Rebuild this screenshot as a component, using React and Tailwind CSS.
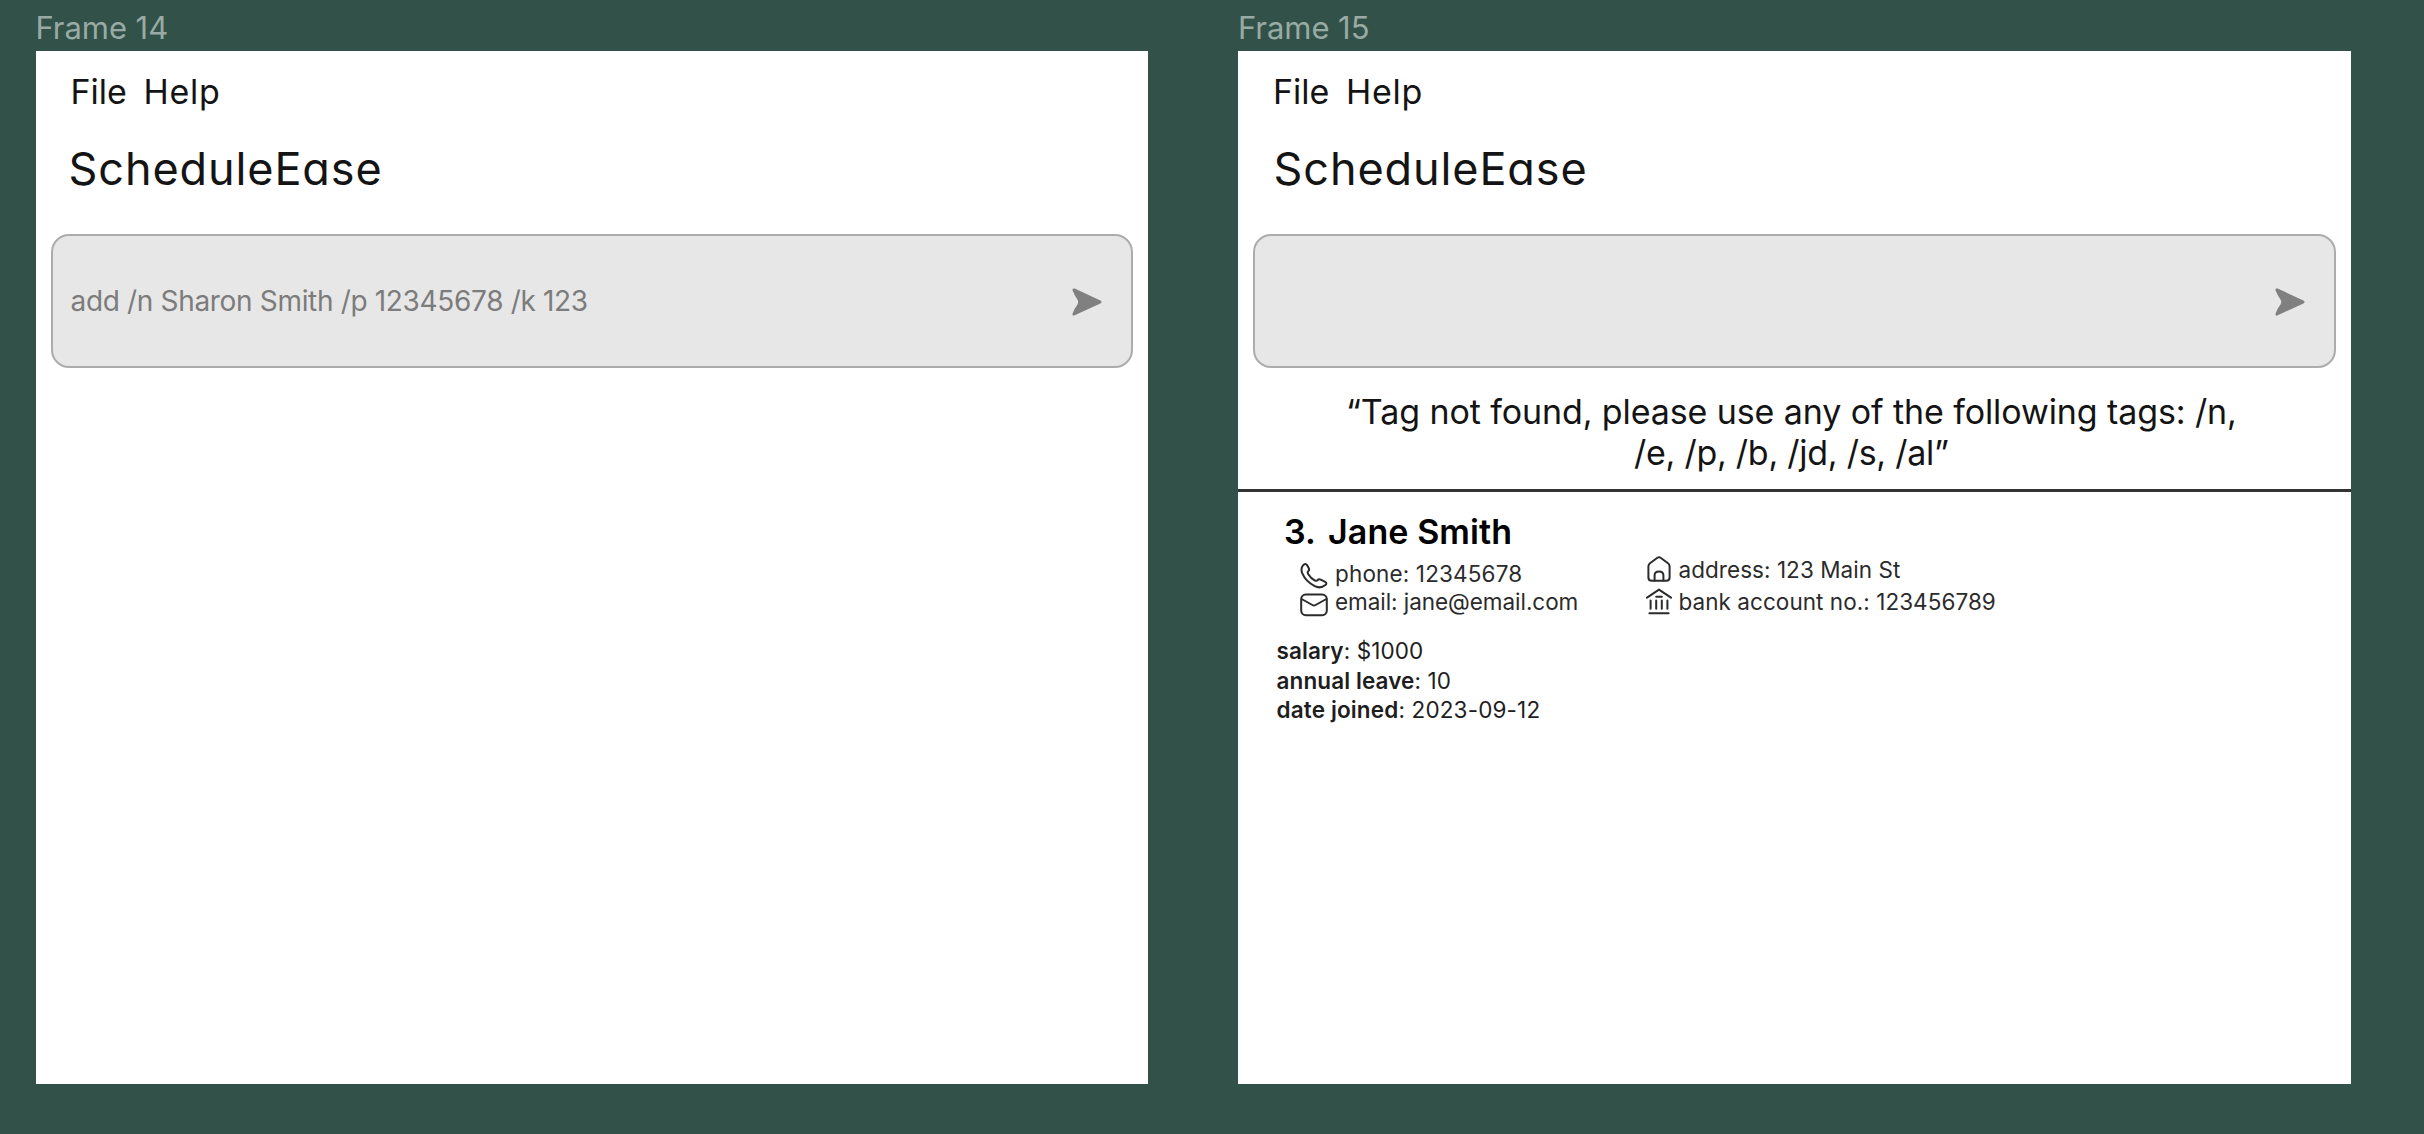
import React from "react";

function SendIcon() {
  return (
    <svg viewBox="0 0 30 28" className="mt-px h-7 w-[30px]" fill="#808080">
      <path d="M0.6 2.6 C0 1 1.2 0 2.7 0.6 L28.4 12.5 C30 13.3 30 14.7 28.4 15.5 L2.7 27.2 C1.2 27.9 0 27 0.6 25.4 Q2.4 20.5 5.6 16.2 Q6.8 14 5.6 11.8 Q2.4 7.5 0.6 2.6 Z" />
    </svg>
  );
}

const stroke = {
  fill: "none",
  stroke: "#2b2b2b",
  strokeWidth: 2,
  strokeLinecap: "round",
  strokeLinejoin: "round",
};

function PhoneIcon() {
  return (
    <svg viewBox="0 0 28 27" className="h-[27px] w-7" {...stroke}>
      <path d="M3.2 3.2 C4.6 1.6 6 1.4 7 3 L8.8 6.2 C9.5 7.6 9 8.5 8.1 9.4 C7.3 10.2 7.6 11 8.3 12.2 C9.9 14.8 12 16.9 14.6 18.3 C15.9 19 16.6 19.1 17.4 18.3 C18.3 17.3 19.4 17 20.7 17.6 L25.2 19.9 C26.8 20.7 26.6 22 25.4 23 C22.6 25.3 18.6 26.1 14.8 24.2 C9.4 21.4 4.6 16.8 2.3 11.4 C1.1 8.5 1.2 5.5 3.2 3.2 Z" />
    </svg>
  );
}

function MailIcon() {
  return (
    <svg viewBox="0 0 28 24" className="h-6 w-7" {...stroke}>
      <rect x="1.2" y="1.6" width="25.6" height="20.6" rx="4.6" />
      <path d="M1.6 6 L12.4 12 Q14 12.9 15.6 12 L26.4 6" />
    </svg>
  );
}

function HomeIcon() {
  return (
    <svg viewBox="0 0 24 26" className="h-[26px] w-6" {...stroke}>
      <path d="M1.4 10.4 Q1.4 8.4 3 7.2 L10.4 1.8 Q12 0.7 13.6 1.8 L21 7.2 Q22.6 8.4 22.6 10.4 V21.4 Q22.6 24.8 19.2 24.8 H4.8 Q1.4 24.8 1.4 21.4 Z" />
      <path d="M7.6 24.6 V19.2 Q7.6 15.4 12 15.4 Q16.4 15.4 16.4 19.2 V24.6" />
    </svg>
  );
}

function BankIcon() {
  return (
    <svg viewBox="0 0 26 27" className="h-[27px] w-[26px]" {...stroke}>
      <path d="M1 9.6 L13 1.6 L25 9.6" />
      <path d="M10.2 8.8 H15.8" />
      <path d="M4.6 12.6 V20.8 M10.2 12.6 V20.8 M15.8 12.6 V20.8 M21.4 12.6 V20.8" />
      <path d="M3.4 25.2 H22.6" />
    </svg>
  );
}

function Frame({ name, titleClass, command, children }) {
  return (
    <section className="flex w-[1112.75px] shrink-0 flex-col">
      <h2 className="flex h-[51px] items-start pt-2.5 text-[31px] leading-9 tracking-[-0.05px] text-[#98aaa4]">
        {name}
      </h2>
      <div className="flex h-[1033px] flex-col bg-white">
        <nav className="flex pt-5 pl-[35px] text-[34px] leading-[41px]">
          <span className="w-[73px]">File</span>
          <span className="tracking-[0.7px]">Help</span>
        </nav>
        <h1 className={titleClass}>ScheduleEase</h1>
        <div className="mx-[15px] mt-[39px] flex h-[134px] shrink-0 items-center justify-between rounded-[18px] border-2 border-[#acacac] bg-[#e7e7e7] pr-[29px] pl-[18px]">
          <span className="text-[28px] leading-[34px] tracking-[-0.33px] text-[#7c7c7c]">
            {command}
          </span>
          <SendIcon />
        </div>
        {children}
      </div>
    </section>
  );
}

export default function App() {
  return (
    <main className="flex h-[1134px] w-[2424px] gap-[89.75px] overflow-hidden bg-[#325249] pl-[35.5px] font-['Inter',sans-serif] text-[#141414]">
      <Frame
        name="Frame 14"
        titleClass="mt-[30px] pl-[33px] text-[45px] leading-[53px] tracking-[0.9px] [font-feature-settings:'cv11']"
        command="add /n Sharon Smith /p 12345678 /k 123"
      />
      <Frame
        name="Frame 15"
        titleClass="mt-[30px] pl-[35.5px] text-[45px] leading-[53px] tracking-[0.9px] [font-feature-settings:'cv11']"
      >
        <p className="mt-[23px] pr-[6px] text-center text-[34px] leading-[41px] tracking-[-0.1px]">
          “Tag not found, please use any of the following tags: /n,
          <br />
          <span className="tracking-[-0.25px]">/e, /p, /b, /jd, /s, /al”</span>
        </p>
        <hr className="mt-4 border-t-[3px] border-[#333333]" />
        <h3 className="mt-[19px] flex gap-[12px] pl-[46px] text-[34px] leading-[41px] font-semibold tracking-[0.1px] text-black">
          <span>3.</span>
          <span>Jane Smith</span>
        </h3>
        <div className="flex pl-[62px] text-[22.5px] text-[#2b2b2b]">
          <ul className="flex w-[346px] flex-col pt-2 leading-7">
            <li className="flex h-7 gap-[7px] tracking-[0.15px]">
              <span className="flex w-7 pt-0.5"><PhoneIcon /></span>
              phone: 12345678
            </li>
            <li className="flex h-7 gap-[7px] tracking-[-0.05px]">
              <span className="flex w-7 pt-[5px]"><MailIcon /></span>
              email: jane@email.com
            </li>
          </ul>
          <ul className="flex flex-col pt-1 leading-7 tracking-[0.05px]">
            <li className="flex h-8 gap-[6.5px]">
              <span className="flex w-[26px] justify-center"><HomeIcon /></span>
              address: 123 Main St
            </li>
            <li className="flex h-8 gap-[6.5px]">
              <span className="flex w-[26px]"><BankIcon /></span>
              bank account no.: 123456789
            </li>
          </ul>
        </div>
        <dl className="mt-4 flex flex-col pl-[38.5px] text-[22.5px] leading-[29.5px] text-[#1e1e1e]">
          <div className="flex tracking-[0.1px]">
            <dt className="font-semibold">salary</dt>
            <dd className="whitespace-pre">: $1000</dd>
          </div>
          <div className="flex tracking-[0.1px]">
            <dt className="font-semibold">annual leave</dt>
            <dd className="whitespace-pre">: 10</dd>
          </div>
          <div className="flex tracking-[0.15px]">
            <dt className="font-semibold">date joined</dt>
            <dd className="whitespace-pre">: 2023-09-12</dd>
          </div>
        </dl>
      </Frame>
    </main>
  );
}
